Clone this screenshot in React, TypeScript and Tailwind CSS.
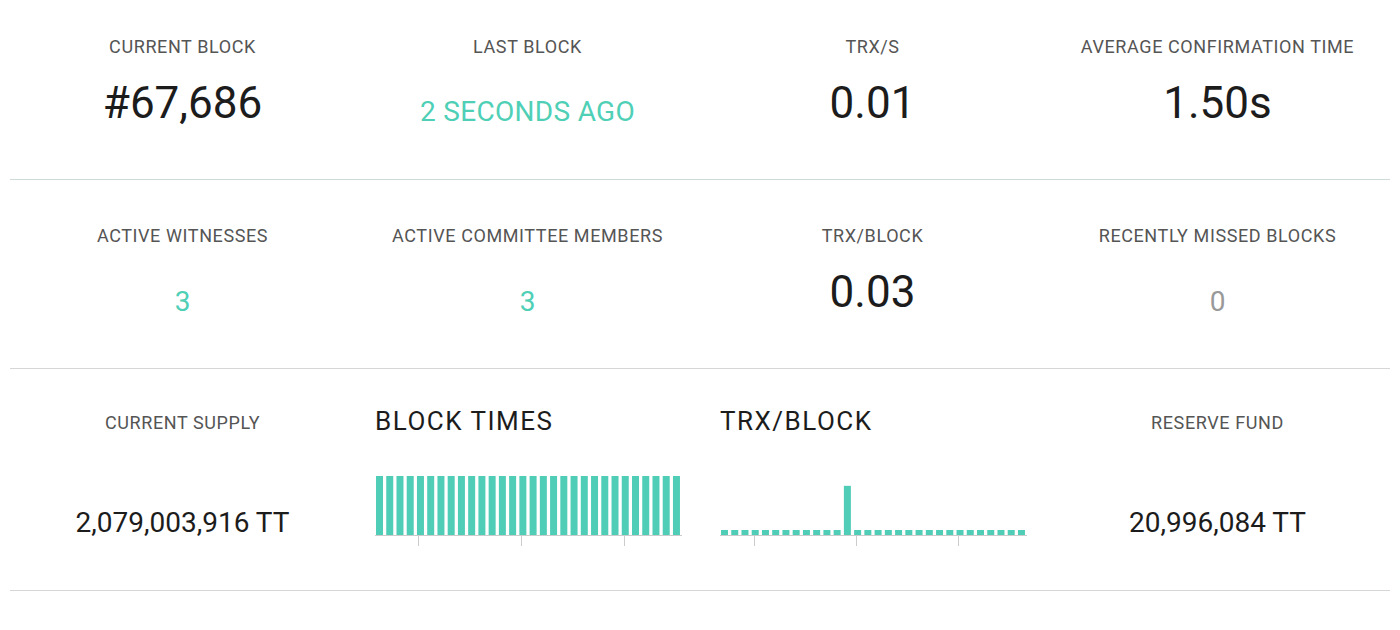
import React from "react";

const teal = "#50cdb6";

function Label({ children }: { children: React.ReactNode }) {
  return (
    <div className="text-[18px] leading-[20px] tracking-[0.6px] text-[#555555] uppercase">
      {children}
    </div>
  );
}

function BigValue({ children }: { children: React.ReactNode }) {
  return (
    <div className="mt-[21px] text-[44px] leading-[50px] text-[#1c1c1c]">
      {children}
    </div>
  );
}

function SmallValue({
  children,
  color,
  className = "",
}: {
  children: React.ReactNode;
  color: string;
  className?: string;
}) {
  return (
    <div className={`text-[28px] leading-[32px] ${color} ${className}`}>
      {children}
    </div>
  );
}

function BarChart({
  values,
  max,
  ticks,
}: {
  values: number[];
  max: number;
  ticks: number[];
}) {
  const h = 80;
  const base = 69;
  const full = 59;
  return (
    <svg width="308" height={h} className="block">
      {values.map((v, i) => {
        const bh = Math.max(5, (v / max) * full);
        return (
          <rect
            key={i}
            x={1 + i * 10.24}
            y={base - bh}
            width={7}
            height={bh}
            fill={teal}
          />
        );
      })}
      <line x1="0" x2="307" y1={base + 0.5} y2={base + 0.5} stroke="#cccccc" />
      {ticks.map((t) => (
        <line
          key={t}
          x1={t + 0.5}
          x2={t + 0.5}
          y1={base}
          y2={base + 11}
          stroke="#cccccc"
        />
      ))}
    </svg>
  );
}

export default function App() {
  const blockTimes = Array.from({ length: 30 }, () => 1);
  const trx = Array.from({ length: 30 }, (_, i) => (i === 12 ? 1 : 0));

  return (
    <div
      className="w-[1400px] h-[630px] bg-white px-[10px]"
      style={{ fontFamily: "Roboto, 'Noto Sans', sans-serif" }}
    >
      <div className="grid grid-cols-4 h-[180px] border-b border-[#cfdbd8]">
        <div className="flex flex-col items-center pt-[37px]">
          <Label>Current Block</Label>
          <BigValue>#67,686</BigValue>
        </div>
        <div className="flex flex-col items-center pt-[37px]">
          <Label>Last Block</Label>
          <SmallValue color="text-[#4fd0b6] tracking-[0.3px]" className="mt-[39px]">
            2 SECONDS AGO
          </SmallValue>
        </div>
        <div className="flex flex-col items-center pt-[37px]">
          <Label>TRX/S</Label>
          <BigValue>0.01</BigValue>
        </div>
        <div className="flex flex-col items-center pt-[37px]">
          <Label>Average Confirmation Time</Label>
          <BigValue>1.50s</BigValue>
        </div>
      </div>

      <div className="grid grid-cols-4 h-[189px] border-b border-[#d6d6d6]">
        <div className="flex flex-col items-center pt-[46px]">
          <Label>Active Witnesses</Label>
          <SmallValue color="text-[#4fd0b6]" className="mt-[40px]">
            3
          </SmallValue>
        </div>
        <div className="flex flex-col items-center pt-[46px]">
          <Label>Active Committee Members</Label>
          <SmallValue color="text-[#4fd0b6]" className="mt-[40px]">
            3
          </SmallValue>
        </div>
        <div className="flex flex-col items-center pt-[46px]">
          <Label>TRX/Block</Label>
          <BigValue>0.03</BigValue>
        </div>
        <div className="flex flex-col items-center pt-[46px]">
          <Label>Recently Missed Blocks</Label>
          <SmallValue color="text-[#999999]" className="mt-[40px]">
            0
          </SmallValue>
        </div>
      </div>

      <div className="grid grid-cols-4 h-[222px] border-b border-[#d6d6d6]">
        <div className="flex flex-col items-center pt-[44px]">
          <Label>Current Supply</Label>
          <SmallValue color="text-[#1c1c1c]" className="mt-[74px]">
            2,079,003,916 TT
          </SmallValue>
        </div>
        <div className="flex flex-col items-start px-5 pt-[37px]">
          <div className="text-[26px] leading-[30px] tracking-[1.5px] text-[#1c1c1c]">
            BLOCK TIMES
          </div>
          <div className="mt-[30px]">
            <BarChart values={blockTimes} max={1} ticks={[43, 146, 249]} />
          </div>
        </div>
        <div className="flex flex-col items-start px-5 pt-[37px]">
          <div className="text-[26px] leading-[30px] tracking-[1.5px] text-[#1c1c1c]">
            TRX/BLOCK
          </div>
          <div className="mt-[30px]">
            <BarChart values={trx} max={1.2} ticks={[34, 136, 238]} />
          </div>
        </div>
        <div className="flex flex-col items-center pt-[44px]">
          <Label>Reserve Fund</Label>
          <SmallValue color="text-[#1c1c1c]" className="mt-[74px]">
            20,996,084 TT
          </SmallValue>
        </div>
      </div>
    </div>
  );
}
